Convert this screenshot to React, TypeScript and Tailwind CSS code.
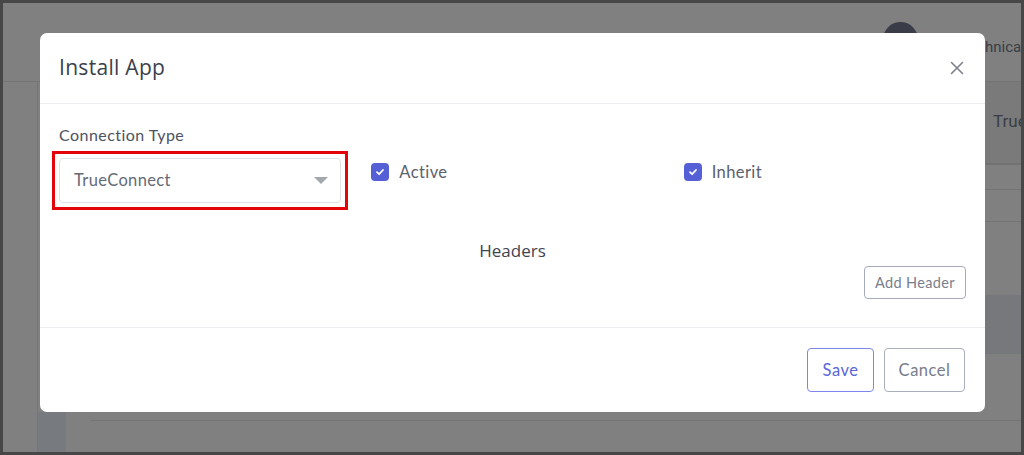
import { useState } from 'react';

function Check({ label, checked, onToggle }: { label: string; checked: boolean; onToggle: () => void }) {
  return (
    <label className="flex items-center gap-[10px] cursor-pointer select-none" onClick={onToggle}>
      <span
        className={`flex items-center justify-center w-[18px] h-[18px] rounded-[4px] ${checked ? 'bg-[#5560d6]' : 'border border-[#b8bcc6] bg-white'}`}
      >
        {checked && (
          <svg width="10" height="10" viewBox="0 0 10 10">
            <path d="M2 5.2 L4.1 7.2 L8 3" fill="none" stroke="#fff" strokeWidth="1.8" strokeLinecap="round" strokeLinejoin="round" />
          </svg>
        )}
      </span>
      <span className="text-[16.5px] tracking-[0.4px] text-[#5b606c]">{label}</span>
    </label>
  );
}

export default function App() {
  const [active, setActive] = useState(true);
  const [inherit, setInherit] = useState(true);

  return (
    <div
      className="relative w-[1024px] h-[455px] overflow-hidden border-[3px] border-[#474747] bg-[#808080]"
      style={{ fontFamily: 'Lato, "Noto Sans", sans-serif' }}
    >
      {/* dimmed page behind the dialog */}
      <div className="flex flex-col h-full">
        <div className="flex items-center h-[79px] border-b border-[#747474] pl-[772px]">
          <span className="w-[26px] h-[24px] mt-[8px] rounded-[3px] bg-[#3e414b]" />
          <span className="w-[20px] h-[20px] ml-[32px] mt-[8px] rounded-full border-[3px] border-[#3e414b]" />
          <span className="w-[40px] h-[40px] ml-[34px] rounded-full bg-[#3a3d47]" />
          <span className="ml-[43px] w-[60px] text-[15px] whitespace-nowrap text-[#3a3d44] mt-[10px]" style={{ fontFamily: 'Roboto, sans-serif' }}>
            Technical
          </span>
        </div>
        <div className="flex flex-1">
          <div className="w-[35px] border-r border-[#767676]" />
          <div className="w-[28px] flex flex-col">
            <div className="flex-1" />
            <div className="h-[40px] bg-[#777a7f]" />
          </div>
          <div className="flex-1 flex flex-col pl-[24px]">
            <div className="h-[81px] bg-[#7a7a7a] flex items-center">
              <div className="flex-1" />
              <span className="w-[28px] whitespace-nowrap text-[17px] text-[#3a3d44] mt-[-2px]" style={{ fontFamily: 'Roboto, sans-serif' }}>
                TrueConnect
              </span>
            </div>
            <div className="h-[2px] bg-[#727272]" />
            <div className="h-[24px]" />
            <div className="h-px bg-[#747474]" />
            <div className="h-[31px]" />
            <div className="h-px bg-[#747474]" />
            <div className="h-[73px]" />
            <div className="h-[59px] bg-[#77787b]" />
            <div className="h-[66px]" />
            <div className="h-px bg-[#747474]" />
          </div>
        </div>
      </div>

      {/* dialog */}
      <div className="absolute left-[37px] top-[30px] w-[945px] h-[379px] bg-white rounded-[7px] flex flex-col">
        <div className="flex items-center justify-between h-[71px] px-[19px] border-b border-[#eceef1]">
          <h2 className="text-[21px] tracking-[0.3px] text-[#3b404c] mt-[-1px]" style={{ fontFamily: '"Open Sans", sans-serif' }}>
            Install App
          </h2>
          <button className="mr-[2px]" aria-label="Close">
            <svg width="14" height="14" viewBox="0 0 14 14">
              <path d="M1.5 1.5 L12.5 12.5 M12.5 1.5 L1.5 12.5" stroke="#7d818b" strokeWidth="1.6" strokeLinecap="round" />
            </svg>
          </button>
        </div>

        <div className="flex-1 flex flex-col px-[19px] pt-[21px] border-b border-[#eceef1]">
          <div className="grid grid-cols-3 gap-x-[30px]">
            <div className="flex flex-col">
              <span className="text-[16px] tracking-[0.45px] leading-[20px] text-[#4d5260] mb-[13px]">Connection Type</span>
              <div className="relative">
                <div className="pointer-events-none absolute -inset-[7px] border-[3px] border-[#e3050a]" />
                <div className="flex items-center justify-between h-[45px] rounded-[4px] border border-[#dfe2e7] pl-[14px] pr-[12px]">
                  <span className="text-[16.5px] tracking-[0.35px] text-[#656a77]">TrueConnect</span>
                  <svg width="14" height="8" viewBox="0 0 14 8">
                    <path d="M0 0 L14 0 L7 7 Z" fill="#a3a7ae" />
                  </svg>
                </div>
              </div>
            </div>
            <div className="pt-[35px]">
              <Check label="Active" checked={active} onToggle={() => setActive(!active)} />
            </div>
            <div className="pt-[35px]">
              <Check label="Inherit" checked={inherit} onToggle={() => setInherit(!inherit)} />
            </div>
          </div>

          <div className="text-center mt-[36px] text-[17px] leading-[24px] text-[#3f4451]" style={{ fontFamily: '"Open Sans", sans-serif' }}>
            Headers
          </div>
          <div className="flex justify-end mt-[3px]">
            <button className="h-[33px] w-[102px] rounded-[4px] border border-[#a5aab8] text-[14.5px] tracking-[0.35px] text-[#787e8d]">
              Add Header
            </button>
          </div>
        </div>

        <div className="flex justify-end items-center gap-[10px] h-[84px] px-[20px]">
          <button className="h-[44px] w-[67px] rounded-[4px] border border-[#7d86e6] text-[16.5px] tracking-[0.5px] text-[#5966d8]">Save</button>
          <button className="h-[44px] w-[81px] rounded-[4px] border border-[#a9aebd] text-[16.5px] tracking-[0.5px] text-[#777c8b]">Cancel</button>
        </div>
      </div>
    </div>
  );
}
